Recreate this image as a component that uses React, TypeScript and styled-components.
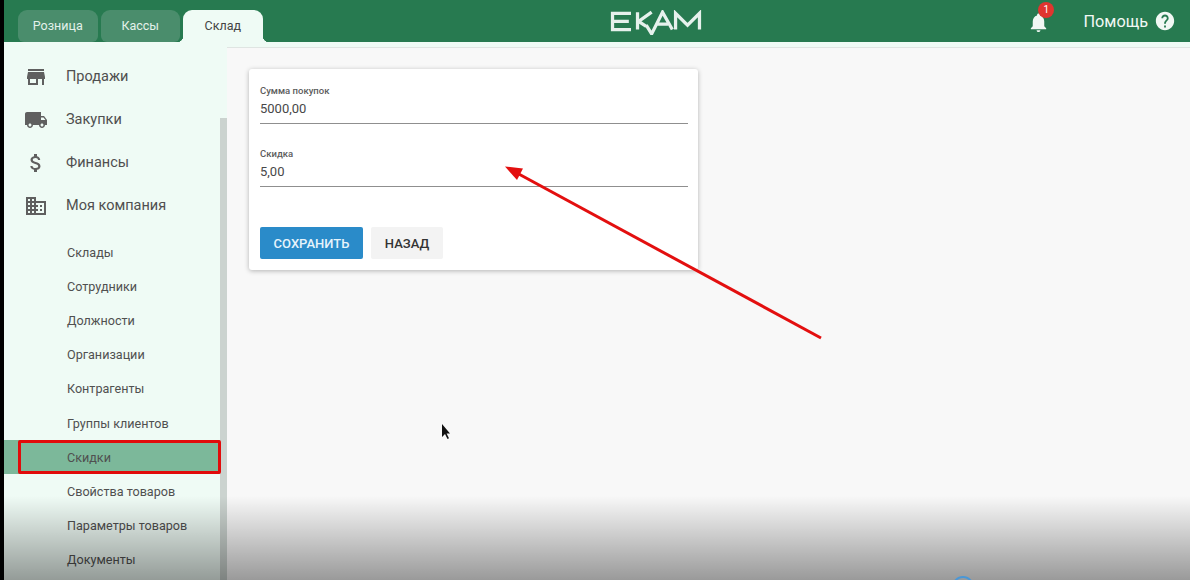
import React from 'react'
import styled, { createGlobalStyle } from 'styled-components'
import { MdStore, MdLocalShipping, MdAttachMoney, MdBusiness, MdNotifications, MdHelp } from 'react-icons/md'

const GlobalStyle = createGlobalStyle`
  html, body {
    margin: 0;
    padding: 0;
    background: #000;
    overflow: hidden;
  }
  * {
    box-sizing: border-box;
  }
`

const Page = styled.div`
  position: relative;
  width: 1190px;
  height: 580px;
  padding-left: 4px;
  overflow: hidden;
  display: flex;
  flex-direction: column;
  font-family: Roboto, 'Liberation Sans', sans-serif;
  background: #000;
`

const TopBar = styled.header`
  position: relative;
  height: 42px;
  flex: none;
  display: flex;
  align-items: flex-end;
  padding-left: 14px;
  background: #277a50;
`

const Tabs = styled.div`
  display: flex;
  gap: 3px;
`

const Tab = styled.div<{ $active?: boolean }>`
  position: relative;
  width: 79.5px;
  height: 32px;
  display: flex;
  align-items: center;
  justify-content: center;
  padding-bottom: 1px;
  border-radius: 9px 9px ${(p) => (p.$active ? '0 0' : '6px 6px')};
  background: ${(p) => (p.$active ? '#effbf5' : '#4a8d6c')};
  color: ${(p) => (p.$active ? '#444' : '#e3f1ea')};
  font-size: 12.5px;

  ${(p) =>
    p.$active &&
    `
    &::before,
    &::after {
      content: '';
      position: absolute;
      bottom: 0;
      width: 6px;
      height: 6px;
    }
    &::before {
      left: -6px;
      background: radial-gradient(circle at 0 0, transparent 6px, #effbf5 6.5px);
    }
    &::after {
      right: -6px;
      background: radial-gradient(circle at 100% 0, transparent 6px, #effbf5 6.5px);
    }
  `}
`

const Logo = styled.svg`
  position: absolute;
  left: 606px;
  top: 10px;
`

const TopRight = styled.div`
  margin-left: auto;
  height: 42px;
  display: flex;
  align-items: center;
  padding-right: 14px;
  color: #f1f8f4;
`

const Bell = styled.div`
  position: relative;
  width: 22px;
  height: 22px;
  margin-top: 2px;
  margin-right: 34px;
  font-size: 23px;
  line-height: 0;
`

const Badge = styled.span`
  position: absolute;
  left: 11px;
  top: -9px;
  width: 16px;
  height: 16px;
  border-radius: 50%;
  background: #e0352f;
  color: #fff;
  font-size: 10px;
  line-height: 16px;
  text-align: center;
`

const HelpText = styled.span`
  font-size: 16.300px;
  margin-right: 6px;
`

const HelpIcon = styled.div`
  font-size: 22px;
  line-height: 0;
`

const Body = styled.div`
  flex: 1;
  display: flex;
  min-height: 0;
  background: #effbf5;
`

const Sidebar = styled.nav`
  width: 216px;
  flex: none;
  padding-top: 13px;
`

const MainItem = styled.div`
  height: 43px;
  display: flex;
  align-items: center;
  padding-left: 20px;
  color: #4f4f4f;
  font-size: 14.5px;
`

const MainIcon = styled.div`
  width: 42px;
  flex: none;
  font-size: 24px;
  line-height: 0;
  color: #5f5f5f;
`

const SubList = styled.div`
  margin-top: 8px;
`

const SubItem = styled.div<{ $selected?: boolean }>`
  position: relative;
  height: 34.2px;
  display: flex;
  align-items: center;
  padding-left: 63px;
  font-size: 12.6px;
  color: #505050;
  background: ${(p) => (p.$selected ? '#7cb89a' : 'transparent')};
`

const RedFrame = styled.div`
  position: absolute;
  left: 14px;
  right: -1px;
  top: 0;
  bottom: 0;
  border: 3px solid #e10b0b;
  border-radius: 2px;
`

const ScrollGutter = styled.div`
  width: 7px;
  flex: none;
  padding-top: 76px;
`

const ScrollThumb = styled.div`
  height: 100%;
  background: #cbd3cf;
`

const Content = styled.main`
  flex: 1;
  margin-top: 5px;
  padding: 21px 0 0 22px;
  border-top: 1px solid #dfe5e2;
  background: #f8f8f8;
`

const Card = styled.section`
  width: 449px;
  height: 201px;
  padding: 16px 10px 0 11px;
  border-radius: 3px;
  background: #fff;
  box-shadow: 0 1px 5px rgba(0, 0, 0, 0.28);
`

const Field = styled.div`
  height: 39px;
  margin-bottom: 24px;
  border-bottom: 1px solid #8f8f8f;
`

const Label = styled.div`
  font-size: 9.5px;
  font-weight: 500;
  line-height: 12px;
  color: #5c5c5c;
`

const Value = styled.div`
  margin-top: 3px;
  font-size: 13px;
  line-height: 18px;
  color: #484848;
`

const Buttons = styled.div`
  display: flex;
  gap: 8px;
  margin-top: 40px;
`

const Button = styled.button<{ $primary?: boolean }>`
  height: 32px;
  width: ${(p) => (p.$primary ? '103px' : '72px')};
  padding: 0;
  border: none;
  border-radius: 2px;
  background: ${(p) => (p.$primary ? '#2a8bc9' : '#f3f3f3')};
  color: ${(p) => (p.$primary ? '#e6f3fb' : '#333')};
  font-family: inherit;
  font-size: 13px;
  font-weight: 500;
`

const BottomFade = styled.div`
  position: absolute;
  left: 4px;
  right: 0;
  bottom: 0;
  height: 84px;
  background: linear-gradient(to bottom, rgba(0, 0, 0, 0), rgba(0, 0, 0, 0.38));
  pointer-events: none;
`

const Overlay = styled.svg`
  position: absolute;
  left: 0;
  top: 0;
  pointer-events: none;
`

const mainItems = [
  { label: 'Продажи', icon: <MdStore /> },
  { label: 'Закупки', icon: <MdLocalShipping /> },
  { label: 'Финансы', icon: <MdAttachMoney /> },
  { label: 'Моя компания', icon: <MdBusiness /> }
]

const subItems = [
  'Склады',
  'Сотрудники',
  'Должности',
  'Организации',
  'Контрагенты',
  'Группы клиентов',
  'Скидки',
  'Свойства товаров',
  'Параметры товаров',
  'Документы'
]

const App: React.FC = () => {
  return (
    <>
      <GlobalStyle />
      <Page>
        <TopBar>
          <Tabs>
            <Tab>Розница</Tab>
            <Tab>Кассы</Tab>
            <Tab $active>Склад</Tab>
          </Tabs>
          <Logo width="92" height="25" viewBox="0 0 84 23" fill="none" stroke="#e6f1ec" strokeWidth="3">
            <path d="M19 3H2v15h17M2 10.500h15" />
            <path d="M25 2v16M38 2 26 10.500 33 15" />
            <path d="M33 14l5 8L48 2l9 16M43 13h10" />
            <path d="M60 18V3l11 11L82 3v15" />
          </Logo>
          <TopRight>
            <Bell>
              <MdNotifications />
              <Badge>1</Badge>
            </Bell>
            <HelpText>Помощь</HelpText>
            <HelpIcon>
              <MdHelp />
            </HelpIcon>
          </TopRight>
        </TopBar>
        <Body>
          <Sidebar>
            {mainItems.map((item) => (
              <MainItem key={item.label}>
                <MainIcon>{item.icon}</MainIcon>
                {item.label}
              </MainItem>
            ))}
            <SubList>
              {subItems.map((name) => (
                <SubItem key={name} $selected={name === 'Скидки'}>
                  {name}
                  {name === 'Скидки' && <RedFrame />}
                </SubItem>
              ))}
            </SubList>
          </Sidebar>
          <ScrollGutter>
            <ScrollThumb />
          </ScrollGutter>
          <Content>
            <Card>
              <Field>
                <Label>Сумма покупок</Label>
                <Value>5000,00</Value>
              </Field>
              <Field>
                <Label>Скидка</Label>
                <Value>5,00</Value>
              </Field>
              <Buttons>
                <Button $primary>СОХРАНИТЬ</Button>
                <Button>НАЗАД</Button>
              </Buttons>
            </Card>
          </Content>
        </Body>
        <BottomFade />
        <Overlay width="1190" height="580" viewBox="0 0 1190 580">
          <path d="M821 338 516 172.500" stroke="#e30f0f" strokeWidth="3" fill="none" />
          <path d="M505 166.500 523 168.500 517 180Z" fill="#e30f0f" />
          <path d="M442 424v13l3-3 2.500 5 1.500-.8-2.400-4.800H450Z" fill="#111" />
          <circle cx="963" cy="587" r="10" stroke="#4a97d6" strokeWidth="2" fill="none" />
        </Overlay>
      </Page>
    </>
  )
}

export default App
